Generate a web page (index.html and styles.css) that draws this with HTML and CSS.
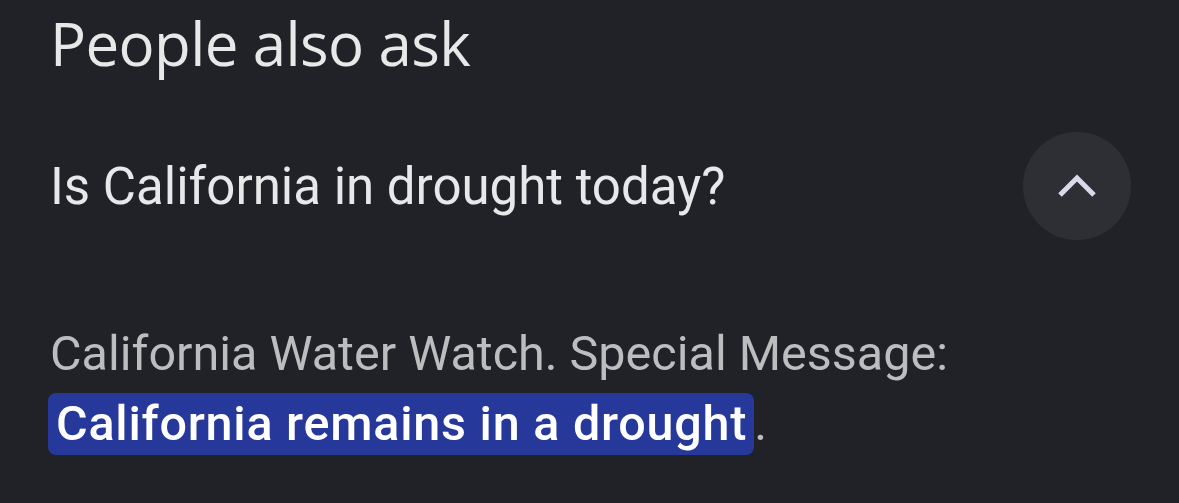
FILE: index.html
```html
<html lang="en">

<head>
    <meta charset="UTF-8">
    <meta name="viewport" content="width=device-width, initial-scale=1.0">
    <title>People also ask</title>
    <link rel="stylesheet" href="styles.css">
</head>

<body>
    <div class="panel">
        <h2 class="title">People also ask</h2>
        <div class="question">
            <span class="question-text">Is California in drought today?</span>
            <button class="toggle" type="button" aria-label="Collapse">
                <svg width="40" height="40" viewBox="0 0 40 40">
                    <path d="M3 29 L20 12 L37 29" fill="none" stroke="#d9d9ea" stroke-width="5" stroke-linecap="butt" stroke-linejoin="miter"/>
                </svg>
            </button>
        </div>
        <p class="answer">California Water Watch. Special Message:<br><span class="hl">California remains in a drought</span>.</p>
    </div>
</body>

</html>
```

FILE: styles.css
```css
body {
    margin: 0;
    background-color: #212227;
    font-family: Roboto, "Liberation Sans", sans-serif;
    height: 100vh;
    overflow: hidden;
}

.panel {
    padding: 0 48px 0 50px;
}

.title {
    margin: 0;
    padding-top: 7px;
    font-family: "Open Sans", sans-serif;
    font-weight: 400;
    font-size: 60px;
    line-height: 72px;
    color: #e8e8e8;
    letter-spacing: -0.6px;
}

.question {
    display: flex;
    align-items: center;
    justify-content: space-between;
    margin-top: 53px;
}

.question-text {
    font-size: 51px;
    color: #e8e8ea;
}

.toggle {
    width: 108px;
    height: 108px;
    border: none;
    border-radius: 50%;
    background-color: #2e2f34;
    display: flex;
    align-items: center;
    justify-content: center;
    padding: 0;
}

.answer {
    margin: 79px 0 0;
    font-size: 48.5px;
    line-height: 70px;
    color: #bdbdc0;
}

.hl {
    background-color: #27389b;
    color: #ffffff;
    font-weight: 500;
    letter-spacing: 0.75px;
    border-radius: 8px;
    padding: 2px 7px 3px 8px;
    margin-left: -2px;
}
```
